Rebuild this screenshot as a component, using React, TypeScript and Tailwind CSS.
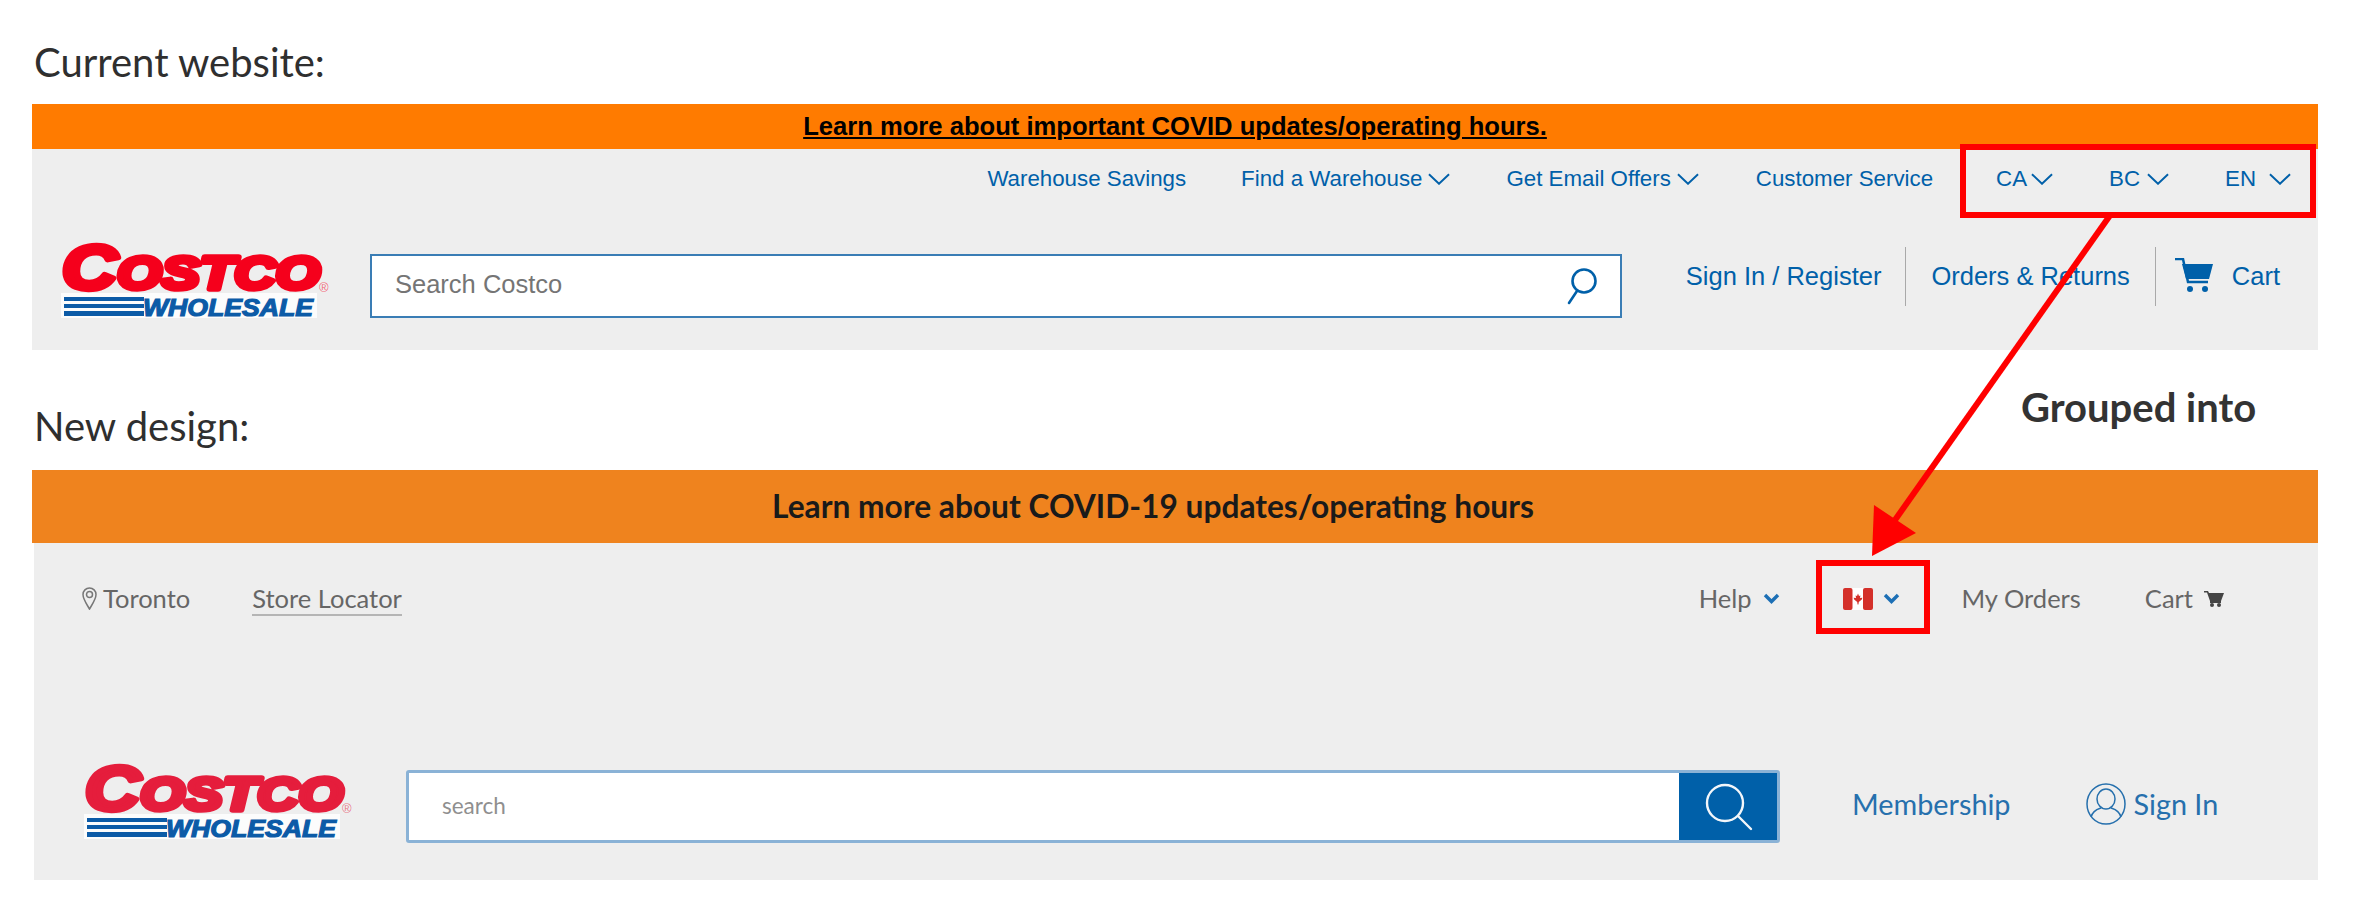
import React from "react";

const Chev = () => (
  <svg width="22" height="12" viewBox="0 0 23 12" fill="none">
    <path d="M1 1 L11.5 11 L22 1" stroke="#0060a9" strokeWidth="2" />
  </svg>
);

const BoldChev = () => (
  <svg width="17" height="11" viewBox="0 0 17 11" fill="none">
    <path d="M2 2 L8.5 8.5 L15 2" stroke="#1c6fb5" strokeWidth="3.4" />
  </svg>
);

const Logo = ({ red, className = "" }: { red: string; className?: string }) => (
  <svg width="268" height="76" viewBox="0 0 268 76" className={`overflow-visible ${className}`}>
    <rect x="0" y="51" width="256" height="25" fill="#fff" fillOpacity="0.8" />
    <g fontFamily="'Liberation Sans', sans-serif" fontWeight="700" fontStyle="italic" fill={red} stroke={red} strokeLinejoin="round">
      <text x="1" y="47" fontSize="63" strokeWidth="5.5" textLength="55" lengthAdjust="spacingAndGlyphs">C</text>
      <text x="56" y="47" fontSize="47" strokeWidth="5.5" textLength="203" lengthAdjust="spacingAndGlyphs">OSTCO</text>
    </g>
    <text x="258" y="50" fontSize="13" fill={red} fillOpacity="0.6" fontFamily="'Liberation Sans', sans-serif">®</text>
    <g fill="#0c5ba7">
      <rect x="3" y="55" width="80" height="4" />
      <rect x="3" y="62" width="80" height="4" />
      <rect x="3" y="69" width="80" height="5" />
    </g>
    <text x="82" y="74" fontSize="24" fontWeight="700" fontStyle="italic" fill="#0c5ba7" stroke="#0c5ba7" strokeWidth="1.2" fontFamily="'Liberation Sans', sans-serif" textLength="170" lengthAdjust="spacingAndGlyphs">WHOLESALE</text>
  </svg>
);

const Flag = () => (
  <svg width="30" height="22" viewBox="0 0 30 22">
    <rect x="0" y="0" width="30" height="22" rx="2" fill="#fff" />
    <rect x="0" y="0" width="9.5" height="22" rx="2" fill="#d4302a" />
    <rect x="20" y="0" width="10" height="22" rx="2" fill="#d4302a" />
    <path d="M15 5.5 L16 8 L17.4 7.4 L17 10 L19.4 9.8 L18.8 11.6 L15.8 14 L15.4 16.5 L14.6 16.5 L14.2 14 L11.2 11.6 L10.6 9.8 L13 10 L12.6 7.4 L14 8 Z" fill="#d4302a" />
  </svg>
);

export default function App() {
  return (
    <div className="relative w-[2354px] h-[918px] bg-white overflow-hidden pl-[32px] font-['Lato',sans-serif] text-[#2f2f2f]">
      <div className="h-[104px] w-[2286px] flex items-center pt-[20px]">
        <span className="text-[40px] pl-[2px] leading-none">Current website:</span>
      </div>

      <div className="w-[2286px] font-['Liberation_Sans',Arial,sans-serif]">
        <div className="h-[45px] bg-[#ff7b00] flex items-center justify-center">
          <span className="text-[25.6px] font-bold text-black underline leading-none">Learn more about important COVID updates/operating hours.</span>
        </div>
        <div className="h-[201px] bg-[#eeeeee] text-[#0060a9]">
          <div className="h-[60px] flex items-center justify-end pr-[27px] text-[22.3px] leading-none">
            <span>Warehouse Savings</span>
            <span className="ml-[55px] flex items-center gap-[6px]">Find a Warehouse<Chev /></span>
            <span className="ml-[56px] flex items-center gap-[6px]">Get Email Offers<Chev /></span>
            <span className="ml-[57px]">Customer Service</span>
            <span className="ml-[63px] flex items-center gap-[4px]">CA<Chev /></span>
            <span className="ml-[56px] flex items-center gap-[7px]">BC<Chev /></span>
            <span className="ml-[56px] flex items-center gap-[13px]">EN<Chev /></span>
          </div>
          <div className="flex items-start pl-[29px] pr-[38px]">
            <Logo red="#f5001c" className="mt-[33px]" />
            <div className="ml-[41px] mt-[45px] w-[1252px] h-[64px] bg-white border-2 border-[#3a7db5] flex items-center justify-between pl-[23px] pr-[22px]">
              <span className="text-[25.5px] text-[#757575] leading-none pb-[3px]">Search Costco</span>
              <svg width="32" height="38" viewBox="0 0 32 38" fill="none" stroke="#0060a9" strokeWidth="2.6">
                <circle cx="18" cy="14" r="11.5" />
                <path d="M11 24 L3 36" strokeLinecap="round" />
              </svg>
            </div>
            <div className="ml-auto mt-[38px] flex items-center text-[25.5px] leading-none">
              <span>Sign In / Register</span>
              <span className="ml-[24px] w-px h-[59px] bg-[#a9a9a9]" />
              <span className="ml-[25px]">Orders &amp; Returns</span>
              <span className="ml-[25px] w-px h-[59px] bg-[#a9a9a9]" />
              <svg className="ml-[19px] -mt-[4px]" width="38" height="34" viewBox="0 0 38 34">
                <path d="M0 1 H8 L13 24 H33" fill="none" stroke="#0060a9" strokeWidth="2.5" />
                <path d="M7 6 H38 L34 21 H11 Z" fill="#0060a9" />
                <circle cx="15" cy="31" r="3" fill="#0060a9" />
                <circle cx="30" cy="31" r="3" fill="#0060a9" />
              </svg>
              <span className="ml-[19px]">Cart</span>
            </div>
          </div>
        </div>
      </div>

      <div className="h-[120px] w-[2286px] flex items-center pt-[32px]">
        <span className="text-[40px] pl-[2px] leading-none">New design:</span>
      </div>

      <div className="w-[2286px]">
        <div className="h-[73px] bg-[#ef831e] flex items-center justify-center pr-[44px]">
          <span className="text-[31.7px] font-bold text-[#1a1a1a] leading-none">Learn more about COVID-19 updates/operating hours</span>
        </div>
        <div className="h-[337px] bg-[#eeeeee] ml-[2px]">
          <div className="h-[114px] flex items-center justify-between pl-[48px] pr-[94px] pb-[3px] text-[25.5px] text-[#666666] leading-none">
            <div className="flex items-center">
              <svg width="15" height="23" viewBox="0 0 15 23" fill="none" stroke="#777" strokeWidth="1.5">
                <path d="M7.5 22 C4 16 1 12 1 7.5 A6.5 6.5 0 0 1 14 7.5 C14 12 11 16 7.5 22 Z" />
                <circle cx="7.5" cy="7.5" r="3" />
              </svg>
              <span className="ml-[6px]">Toronto</span>
              <span className="ml-[62px] mt-[5px] border-b-2 border-[#b5b5b5] pb-[2px]">Store Locator</span>
            </div>
            <div className="flex items-center">
              <span>Help</span>
              <span className="ml-[12px] flex"><BoldChev /></span>
              <span className="ml-[63px] flex"><Flag /></span>
              <span className="ml-[10px] flex"><BoldChev /></span>
              <span className="ml-[61px]">My Orders</span>
              <span className="ml-[64px]">Cart</span>
              <svg className="ml-[11px]" width="20" height="17" viewBox="0 0 20 17" fill="#444">
                <path d="M0 1 H4 L5 3 H20 L17 11 H6 L3 2.5 H0 Z" />
                <rect x="6" y="11" width="11" height="2" />
                <circle cx="8" cy="15" r="2" />
                <circle cx="15" cy="15" r="2" />
              </svg>
            </div>
          </div>
          <div className="flex items-start pl-[50px] mt-[106px]">
            <Logo red="#e51d3c" />
            <div className="ml-[54px] mt-[7px] w-[1374px] h-[73px] flex rounded-[3px] overflow-hidden border-[3px] border-[#8ab2d6] bg-white">
              <div className="flex-1 flex items-center pl-[33px] pb-[1px] text-[22.5px] text-[#8f8f8f] leading-none">search</div>
              <div className="w-[101px] -my-[3px] -mr-[3px] bg-[#0060a9] flex items-center justify-center pr-[2px]">
                <svg width="48" height="48" viewBox="0 0 48 48" fill="none" stroke="#f2f6fa" strokeWidth="2.4">
                  <circle cx="20" cy="20" r="18" />
                  <path d="M33 33 L46 46" strokeLinecap="round" />
                </svg>
              </div>
            </div>
            <div className="ml-[72px] mt-[20px] flex items-center text-[28.8px] text-[#2670ad] leading-none">
              <span>Membership</span>
              <svg className="ml-[75px]" width="40" height="42" viewBox="0 0 40 42" fill="none" stroke="#2670ad" strokeWidth="1.5">
                <ellipse cx="20" cy="21" rx="19" ry="20" />
                <ellipse cx="20" cy="16" rx="9" ry="10" />
                <path d="M5 34 C7 27 12 26 15 25 M35 34 C33 27 28 26 25 25" />
              </svg>
              <span className="ml-[8px]">Sign In</span>
            </div>
          </div>
        </div>
      </div>

      <div className="absolute left-[2021px] top-[387px] text-[40px] font-bold text-[#333] leading-[40px]">Grouped into</div>
      <div className="absolute left-[1960px] top-[144px] w-[356px] h-[74px] border-[6px] border-[#ff0000]" />
      <div className="absolute left-[1816px] top-[560px] w-[114px] h-[74px] border-[6px] border-[#ff0000]" />
      <svg className="absolute left-0 top-0 pointer-events-none" width="2354" height="918" viewBox="0 0 2354 918">
        <polygon points="1872,556 1874,505 1916,533" fill="#ff0000" />
        <line x1="2111" y1="214" x2="1895" y2="520" stroke="#ff0000" strokeWidth="6" />
      </svg>
    </div>
  );
}
